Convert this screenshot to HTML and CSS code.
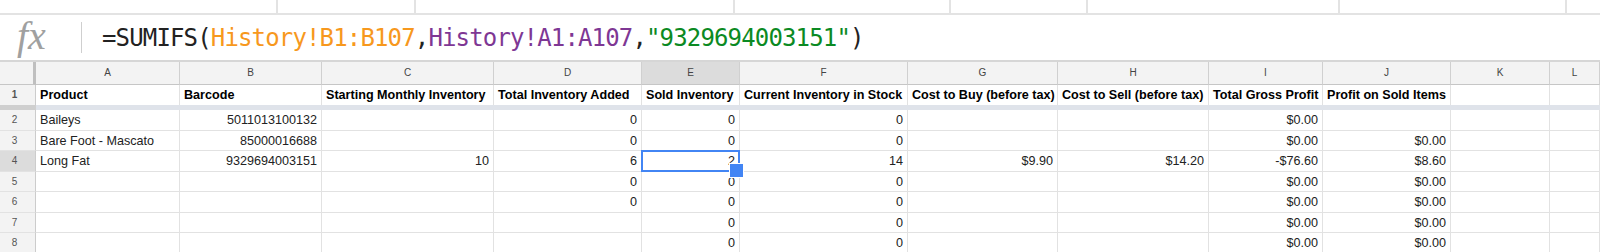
FILE: index.html
```html
<!DOCTYPE html>
<html lang="en">
<head>
    <meta charset="UTF-8">
    <meta name="viewport" content="width=device-width, initial-scale=1.0">
    <title>Inventory - Sheet</title>
    <link rel="stylesheet" href="styles.css">
</head>
<body>
    <div class="toolbar">
        <div class="tb-seg" style="width:278px"></div>
        <div class="tb-seg" style="width:138px"></div>
        <div class="tb-seg" style="width:319px"></div>
        <div class="tb-seg" style="width:216px"></div>
        <div class="tb-seg" style="width:137px"></div>
        <div class="tb-seg" style="width:252px"></div>
        <div class="tb-seg" style="width:227px"></div>
    </div>

    <div class="formula-bar">
        <span class="fx">fx</span>
        <span class="fx-divider"></span>
        <span class="formula">=SUMIFS(<span class="ref-a">History!B1:B107</span>,<span class="ref-b">History!A1:A107</span>,<span class="str">"9329694003151"</span>)</span>
    </div>

    <div class="grid">
        <div class="row col-heads">
            <div class="corner"></div>
            <div>A</div><div>B</div><div>C</div><div>D</div><div class="hl">E</div><div>F</div>
            <div>G</div><div>H</div><div>I</div><div>J</div><div>K</div><div>L</div>
        </div>

        <div class="row head-row">
            <div class="num">1</div>
            <div>Product</div>
            <div>Barcode</div>
            <div>Starting Monthly Inventory</div>
            <div>Total Inventory Added</div>
            <div>Sold Inventory</div>
            <div>Current Inventory in Stock</div>
            <div>Cost to Buy (before tax)</div>
            <div>Cost to Sell (before tax)</div>
            <div>Total Gross Profit</div>
            <div>Profit on Sold Items</div>
            <div></div><div></div>
        </div>

        <div class="freeze"></div>

        <div class="row">
            <div class="num">2</div>
            <div>Baileys</div><div class="r">5011013100132</div><div></div>
            <div class="r">0</div><div class="r">0</div><div class="r">0</div>
            <div></div><div></div><div class="r">$0.00</div><div></div><div></div><div></div>
        </div>
        <div class="row">
            <div class="num">3</div>
            <div>Bare Foot - Mascato</div><div class="r">85000016688</div><div></div>
            <div class="r">0</div><div class="r">0</div><div class="r">0</div>
            <div></div><div></div><div class="r">$0.00</div><div class="r">$0.00</div><div></div><div></div>
        </div>
        <div class="row">
            <div class="num hl">4</div>
            <div>Long Fat</div><div class="r">9329694003151</div><div class="r">10</div>
            <div class="r">6</div><div class="r sel">2</div><div class="r">14</div>
            <div class="r">$9.90</div><div class="r">$14.20</div><div class="r">-$76.60</div><div class="r">$8.60</div><div></div><div></div>
        </div>
        <div class="row">
            <div class="num">5</div>
            <div></div><div></div><div></div>
            <div class="r">0</div><div class="r">0</div><div class="r">0</div>
            <div></div><div></div><div class="r">$0.00</div><div class="r">$0.00</div><div></div><div></div>
        </div>
        <div class="row">
            <div class="num">6</div>
            <div></div><div></div><div></div>
            <div class="r">0</div><div class="r">0</div><div class="r">0</div>
            <div></div><div></div><div class="r">$0.00</div><div class="r">$0.00</div><div></div><div></div>
        </div>
        <div class="row">
            <div class="num">7</div>
            <div></div><div></div><div></div>
            <div></div><div class="r">0</div><div class="r">0</div>
            <div></div><div></div><div class="r">$0.00</div><div class="r">$0.00</div><div></div><div></div>
        </div>
        <div class="row">
            <div class="num">8</div>
            <div></div><div></div><div></div>
            <div></div><div class="r">0</div><div class="r">0</div>
            <div></div><div></div><div class="r">$0.00</div><div class="r">$0.00</div><div></div><div></div>
        </div>
    </div>
</body>
</html>
```

FILE: styles.css
```css
* {
    box-sizing: border-box;
}
body {
    margin: 0;
    background: #fff;
    color: #222;
    font-family: "Liberation Sans", Arial, sans-serif;
    overflow: hidden;
}

/* strip of the toolbar above the formula bar */
.toolbar {
    display: flex;
    height: 15px;
    border-bottom: 2px solid #e3e3e3;
}
.tb-seg {
    border-right: 2px solid #e3e3e3;
}

/* Formula bar */
.formula-bar {
    display: flex;
    align-items: center;
    height: 47px;
    border-bottom: 2px solid #d6d6d6;
}
.fx {
    width: 81px;
    padding-left: 17px;
    font-family: "Liberation Serif", serif;
    font-style: italic;
    font-size: 40px;
    color: #a0a0a0;
    line-height: 1;
    margin-top: -4px;
}
.fx-divider {
    width: 1px;
    height: 31px;
    background: #cfcfcf;
}
.formula {
    margin-left: 20px;
    font-family: "DejaVu Sans Mono", monospace;
    font-size: 24px;
    letter-spacing: -0.85px;
    color: #222;
    white-space: nowrap;
}
.ref-a {
    color: #f7981d;
}
.ref-b {
    color: #7e3794;
}
.str {
    color: #0b8a23;
}

/* Sheet grid */
.row {
    display: grid;
    grid-template-columns: 36px 144px 142px 172px 148px 98px 168px 150px 151px 114px 128px 99px 50px;
    height: 20.5px;
}
.row > div {
    border-right: 1px solid #e2e2e2;
    border-bottom: 1px solid #e2e2e2;
    padding: 0 4px;
    font-size: 12.6px;
    line-height: 20px;
    white-space: nowrap;
    overflow: hidden;
}
.row > .r {
    text-align: right;
}
.row > .num {
    background: #f3f3f3;
    border-right-color: #cccccc;
    padding: 0 6px 0 0;
    text-align: center;
    font-size: 10px;
    color: #555;
}
.row > .hl {
    background: #dcdcdc;
}

.col-heads {
    height: 23px;
}
.col-heads > div {
    background: #f3f3f3;
    border-right-color: #d0d0d0;
    border-bottom-color: #c6c6c6;
    text-align: center;
    font-size: 10px;
    line-height: 22px;
    color: #444;
}
.col-heads > .corner {
    border-right: 3px solid #bfbfbf;
}
.col-heads > .hl {
    background: #dcdcdc;
}

.head-row {
    height: 20px;
}
.head-row > div {
    font-weight: bold;
    color: #000;
    border-bottom: none;
}

.freeze {
    height: 5px;
    background: #dfe3ea;
    border-left: 36px solid #cfcfcf;
}

/* selected cell with fill handle */
.row > .sel {
    position: relative;
    overflow: visible;
}
.sel::before {
    content: "";
    position: absolute;
    left: -1px;
    top: -1px;
    right: -1px;
    bottom: -1px;
    border: 2px solid #4285f4;
}
.sel::after {
    content: "";
    position: absolute;
    right: -5px;
    bottom: -7px;
    width: 13px;
    height: 13px;
    background: #4285f4;
    border: 1px solid #fff;
    z-index: 2;
}
```
